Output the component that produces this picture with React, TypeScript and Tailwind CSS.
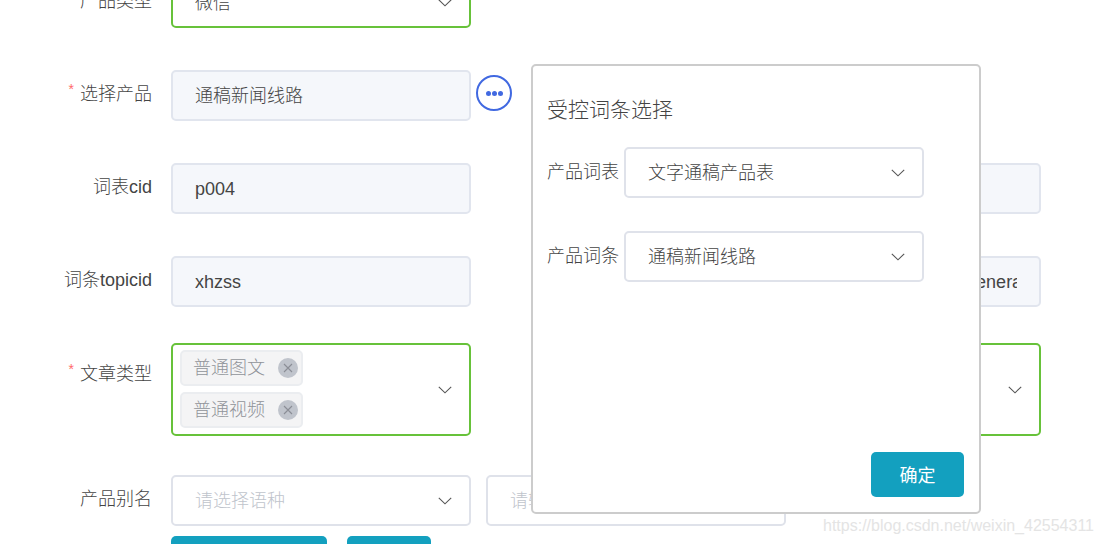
const Chevron = () => (
  <svg width="14" height="8" viewBox="0 0 14 8" fill="none" className="shrink-0 text-[#555]">
    <path d="M0.8 0.8 L7 6.8 L13.2 0.8" stroke="currentColor" strokeWidth="1.1" />
  </svg>
)

function TextField({ value, className = '' }: { value: string; className?: string }) {
  return (
    <div className={`flex h-[51px] w-[300px] items-center overflow-hidden rounded-[5px] border-2 border-[#e1e5ee] bg-[#f5f7fb] px-[22px] pt-[2px] text-[18px] text-[#444] ${className}`}>
      <span className="overflow-hidden whitespace-nowrap">{value}</span>
    </div>
  )
}

function SelectField({ value, placeholder, green }: { value?: string; placeholder?: string; green?: boolean }) {
  return (
    <div className={`flex h-[51px] w-[300px] items-center justify-between rounded-[5px] border-2 bg-white pl-[22px] pr-[17px] text-[18px] ${green ? 'border-[#67c23a]' : 'border-[#dfe2ea]'}`}>
      <span className={`pt-[2px] ${value ? 'text-[#444]' : 'text-[#c0c4cc]'}`}>{value ?? placeholder}</span>
      <Chevron />
    </div>
  )
}

function Tag({ text }: { text: string }) {
  return (
    <div className="flex h-[36px] w-[123px] items-center justify-between rounded-[5px] border-2 border-[#ebedf0] bg-[#f4f4f5] pl-[11px] pr-[3px] text-[18px] text-[#909399]">
      <span className="pt-[2px]">{text}</span>
      <span className="flex h-[20px] w-[20px] items-center justify-center rounded-full bg-[#c0c4cc]">
        <svg width="10" height="10" viewBox="0 0 10 10" fill="none">
          <path d="M1 1 L9 9 M9 1 L1 9" stroke="#8b8e96" strokeWidth="1.1" />
        </svg>
      </span>
    </div>
  )
}

function Label({ text, required, className = '' }: { text: string; required?: boolean; className?: string }) {
  return (
    <div className={`flex w-[153px] shrink-0 justify-end whitespace-nowrap pr-px text-[18px] leading-[26px] text-[#444] ${className}`}>
      {required && <span className="-mt-[2px] mr-[6px] text-[14px] leading-[20px] text-[#ff6b6b]">*</span>}
      {text}
    </div>
  )
}

function Row({ children, className = '' }: { children: React.ReactNode; className?: string }) {
  return <div className={`flex w-[1041px] ${className}`}>{children}</div>
}

export default function App() {
  return (
    <div className="relative h-[544px] w-[1102px] overflow-hidden bg-white font-['Liberation_Sans','Noto_Sans_CJK_SC',sans-serif] font-light">
      <div className="-mt-[23px] flex flex-col">
        <Row className="items-center">
          <Label text="产品类型" className="-mt-[3px]" />
          <div className="ml-[18px]">
            <SelectField value="微信" green />
          </div>
        </Row>

        <Row className="mt-[42px] items-center">
          <Label text="选择产品" required className="-mt-[3px]" />
          <TextField value="通稿新闻线路" className="ml-[18px]" />
          <button className="-mt-[6px] ml-[5px] flex h-[36px] w-[36px] items-center justify-center gap-px rounded-full border-2 border-[#4169e1] bg-white pt-[2px]">
            <span className="h-[5px] w-[5px] rounded-full bg-[#4169e1]" />
            <span className="h-[5px] w-[5px] rounded-full bg-[#4169e1]" />
            <span className="h-[5px] w-[5px] rounded-full bg-[#4169e1]" />
          </button>
        </Row>

        <Row className="mt-[42px] items-center justify-between">
          <div className="flex items-center">
            <Label text="词表cid" className="-mt-[3px]" />
            <TextField value="p004" className="ml-[18px]" />
          </div>
          <TextField value="" />
        </Row>

        <Row className="mt-[42px] items-center justify-between">
          <div className="flex items-center">
            <Label text="词条topicid" className="-mt-[3px]" />
            <TextField value="xhzss" className="ml-[18px]" />
          </div>
          <TextField value="com.xinhua.news.text.ctl.general" />
        </Row>

        <Row className="mt-[36px] justify-between">
          <div className="flex">
            <Label text="文章类型" required className="mt-[18px]" />
            <div className="ml-[18px] flex h-[93px] w-[300px] items-center justify-between rounded-[5px] border-2 border-[#67c23a] pl-[7px] pr-[17px]">
              <div className="-mt-[2px] flex flex-col gap-[6px]">
                <Tag text="普通图文" />
                <Tag text="普通视频" />
              </div>
              <Chevron />
            </div>
          </div>
          <div className="flex h-[93px] w-[300px] items-center justify-end rounded-[5px] border-2 border-[#67c23a] pr-[17px]">
            <Chevron />
          </div>
        </Row>

        <Row className="mt-[39px] items-center">
          <Label text="产品别名" className="-mt-[3px]" />
          <div className="ml-[18px]">
            <SelectField placeholder="请选择语种" />
          </div>
          <div className="ml-[15px] flex h-[51px] w-[300px] items-center rounded-[5px] border-2 border-[#dfe2ea] bg-white px-[22px] pt-[2px] text-[18px] text-[#c0c4cc]">
            请输入别名
          </div>
        </Row>

        <div className="ml-[171px] mt-[10px] flex gap-[20px]">
          <div className="h-[45px] w-[156px] rounded-[5px] bg-[#13a0bf]" />
          <div className="h-[45px] w-[84px] rounded-[5px] bg-[#13a0bf]" />
        </div>
      </div>

      <div className="absolute left-[531px] top-[64px] flex h-[450px] w-[450px] flex-col rounded-[5px] border-2 border-[#cccccc] bg-white pl-[14px] pr-[15px]">
        <div className="mt-[29px] text-[21px] leading-[30px] text-[#444]">受控词条选择</div>
        <div className="mt-[22px] flex items-center">
          <span className="w-[77px] text-[18px] text-[#444]">产品词表</span>
          <SelectField value="文字通稿产品表" />
        </div>
        <div className="mt-[33px] flex items-center">
          <span className="w-[77px] text-[18px] text-[#444]">产品词条</span>
          <SelectField value="通稿新闻线路" />
        </div>
        <button className="mb-[15px] ml-auto mt-auto h-[45px] w-[93px] rounded-[5px] bg-[#13a0bf] pt-[3px] text-[18px] font-normal text-white">确定</button>
      </div>

      <div className="absolute left-[823px] top-[515px] whitespace-nowrap font-['Liberation_Sans',sans-serif] text-[16px] leading-[22px] text-[#e4e4e4]">
        https://blog.csdn.net/weixin_42554311
      </div>
    </div>
  )
}
